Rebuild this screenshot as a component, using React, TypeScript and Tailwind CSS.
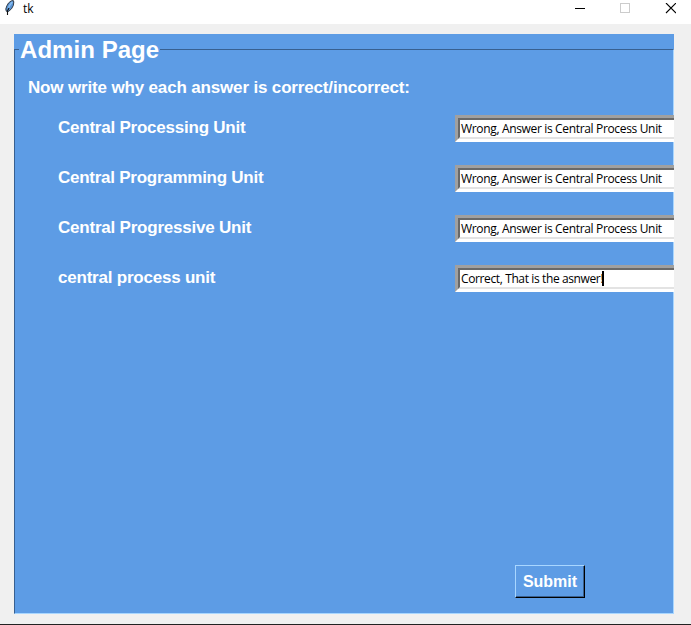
const FEEDBACK = [
  { label: "Central Processing Unit", track: "tracking-[-0.23px]", text: "Wrong, Answer is Central Process Unit", active: false },
  { label: "Central Programming Unit", track: "tracking-[-0.26px]", text: "Wrong, Answer is Central Process Unit", active: false },
  { label: "Central Progressive Unit", track: "tracking-[-0.22px]", text: "Wrong, Answer is Central Process Unit", active: false },
  { label: "central process unit", track: "tracking-[-0.22px]", text: "Correct, That is the asnwer!", active: true },
];

function Feather() {
  return (
    <svg width="12" height="17" viewBox="0 0 12 17" className="-mt-px ml-[4px] shrink-0">
      <path d="M9.3 1.5 L7 2 L4.5 4 L2.8 7 L1.8 10 L2.3 12.3 L4.5 12.5 L7.5 9.8 L9.3 6.5 L9.8 3 Z" fill="#5b95d6" stroke="#303a46" strokeWidth="1" />
      <path d="M8.3 3 L5.5 6.5 L4.2 9.5" fill="none" stroke="#8cc0f2" strokeWidth="1.4" />
      <path d="M5 9 L3.5 12 L3.5 16" fill="none" stroke="#111" strokeWidth="1.1" />
    </svg>
  );
}

function TitleBar() {
  return (
    <header className="flex h-6 items-start bg-white">
      <Feather />
      <span className="ml-[7px] h-[17px] font-['Open_Sans','Noto_Sans',sans-serif] text-[12px] leading-[17px] text-black">tk</span>
      <svg width="101" height="11" viewBox="0 0 101 11" className="mt-[3px] mr-[15px] ml-auto" shapeRendering="crispEdges">
        <path d="M0 5.5h10" stroke="#000" fill="none" />
        <rect x="45.5" y="0.5" width="9" height="9" fill="none" stroke="#ccc" />
        <path d="M91 0L101 10M101 0L91 10" stroke="#000" strokeWidth="1.1" fill="none" shapeRendering="auto" />
      </svg>
    </header>
  );
}

function Entry({ text, active }: { text: string; active: boolean }) {
  return (
    <div className="-mr-px h-[27px] w-[216px] grow border-y-[3px] border-l-[3px] border-t-[#a0a0a0] border-b-white border-l-[#a0a0a0]">
      <div className="flex h-[21px] items-start border-y-2 border-l-2 border-t-[#696969] border-b-[#e3e3e3] border-l-[#696969] bg-white pl-px">
        <span className={`font-['Open_Sans','Noto_Sans',sans-serif] text-[12px] leading-[18px] font-normal whitespace-nowrap text-black ${active ? "tracking-[-0.38px]" : "tracking-[-0.34px]"}`}>{text}</span>
        {active && <i className="mt-px -ml-px h-[15px] w-0.5 bg-black" />}
      </div>
    </div>
  );
}

export default function App() {
  return (
    <div className="flex h-[625px] w-[691px] flex-col overflow-hidden border-b border-[#222] bg-[#f0f0f0] font-['Liberation_Sans',Arial,sans-serif]">
      <TitleBar />
      <main className="mt-[10px] ml-[14px] h-[580px] w-[660px] bg-[#5d9ce5] pt-[15px] font-bold text-white">
        <section className="flex h-[565px] flex-col border border-t-[#386090] border-r-[#a8d6ff] border-b-[#a8d6ff] border-l-[#386090]">
          <h1 className="-mt-4 ml-1 h-8 w-[141px] bg-[#5d9ce5] pl-px text-[24px] leading-8 whitespace-nowrap">
            <span className="tracking-[0.05px]">Admin Page</span>
          </h1>
          <p className="mt-3 ml-[13px] h-5 text-[17px] leading-5 whitespace-nowrap">
            <span className="tracking-[-0.16px]">Now write why each answer is correct/incorrect:</span>
          </p>
          <div className="mt-[17px] flex flex-col gap-[23px]">
            {FEEDBACK.map((f) => (
              <div key={f.label} className="flex h-[27px] items-start">
                <label className="ml-[43px] w-[397px] shrink-0 pt-[3px] text-[17px] leading-5 whitespace-nowrap">
                  <span className={f.track}>{f.label}</span>
                </label>
                <Entry text={f.text} active={f.active} />
              </div>
            ))}
          </div>
          <button className="mt-auto mb-[15px] ml-[500px] h-[33px] w-[70px] border border-t-[#a8d6ff] border-r-black border-b-black border-l-[#a8d6ff]">
            <span className="flex h-full items-center justify-center border-r border-b border-[#386090] pt-px pl-px text-[16px] leading-5">Submit</span>
          </button>
        </section>
      </main>
    </div>
  );
}
